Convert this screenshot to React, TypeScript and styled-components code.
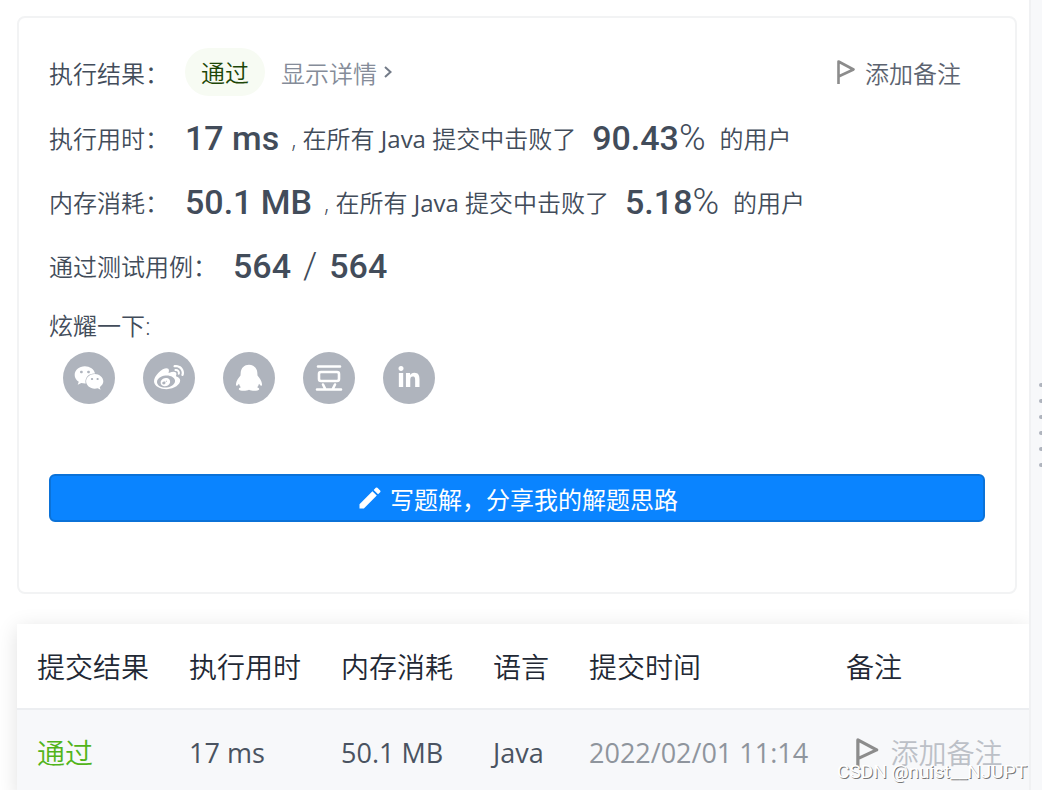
import React from "react";
import styled, { createGlobalStyle } from "styled-components";
import { FaWeixin, FaWeibo, FaLinkedinIn } from "react-icons/fa";
import { MdEdit } from "react-icons/md";

const GlobalStyle = createGlobalStyle`
  * { box-sizing: border-box; }
  body {
    margin: 0;
    background: #fff;
    color: #424c5a;
    font-family: "Open Sans", "Noto Sans CJK SC", sans-serif;
    font-size: 24px;
    font-weight: 350;
    line-height: 32px;
  }
  button { font: inherit; color: inherit; background: none; border: 0; padding: 0; cursor: pointer; }
`;

const Page = styled.div`
  position: relative;
  display: flex;
  height: 100vh;
  overflow: hidden;
`;

const Main = styled.main`
  flex: 1;
  min-width: 0;
  display: flex;
  flex-direction: column;
  gap: 30px;
  padding-top: 16px;
  overflow: hidden;
`;

const Gutter = styled.div`
  flex: 0 0 13px;
  display: flex;
  flex-direction: column;
  align-items: flex-end;
  justify-content: center;
  gap: 12px;
  padding-top: 60px;
  background: #f7f8fa;
  border-left: 2px solid #f0f1f3;
`;

const Dot = styled.span`
  width: 3px;
  height: 4px;
  border-radius: 2px 0 0 2px;
  background: #afb4bd;
`;

const Card = styled.section`
  display: flex;
  flex-direction: column;
  margin: 0 12px 0 17px;
  padding: 30px 30px 70px;
  border: 2px solid #f2f3f4;
  border-radius: 8px;
`;

const ResultRow = styled.div`
  display: flex;
  align-items: center;
  height: 48px;
  gap: 16px;
`;

const StatRow = styled.div`
  display: flex;
  align-items: center;
  height: 48px;
  margin-top: 16px;
  padding-top: 6px;
  line-height: 48px;
  white-space: pre;
`;

const Label = styled.span<{ $width: number }>`
  width: ${(p) => p.$width}px;
  white-space: nowrap;
`;

const Text = styled.span`
  padding-top: 3px;
`;

const Badge = styled.span`
  padding: 9px 16px 7px;
  border-radius: 24px;
  background: #f7fbf3;
  color: #1d4607;
`;

const DetailLink = styled.a`
  display: flex;
  align-items: center;
  gap: 6px;
  color: #858c99;
  text-decoration: none;
`;

const NoteButton = styled.button<{ $muted?: boolean }>`
  display: flex;
  align-items: center;
  gap: ${(p) => (p.$muted ? 12 : 10)}px;
  margin-left: ${(p) => (p.$muted ? "10px" : "auto")};
  margin-right: ${(p) => (p.$muted ? 0 : 24)}px;
  color: ${(p) => (p.$muted ? "#bcc0c7" : "#5c6370")};
  white-space: nowrap;
`;

const Figure = styled.strong`
  padding-bottom: 3px;
  font-family: Roboto, sans-serif;
  font-size: 34px;
  font-weight: 500;
`;

const Percent = styled.span`
  margin-right: 14px;
  padding-bottom: 3px;
  font-family: Roboto, sans-serif;
  font-size: 36px;
  font-weight: 300;
`;

const Slash = styled(Percent)`
  margin: 0 12px;
`;

const Caption = styled.span`
  margin: 0 16px 0 12px;
`;

const Language = styled.span`
  font-weight: 400;
`;

const ShareTitle = styled.div`
  margin-top: 22px;
`;

const ShareList = styled.div`
  display: flex;
  gap: 28px;
  margin: 10px 14px 70px;
`;

const ShareButton = styled.button`
  display: grid;
  place-items: center;
  width: 52px;
  height: 52px;
  border-radius: 50%;
  background: #afb4bd;
  color: #fff;
`;

const WriteButton = styled.button`
  display: flex;
  align-items: center;
  justify-content: center;
  gap: 6px;
  height: 48px;
  border: 2px solid #0b72d8;
  border-radius: 6px;
  background: #0a84ff;
  color: #fff;
  font-weight: 400;
`;

const Table = styled.table`
  width: calc(100% - 17px);
  margin-left: 17px;
  border-spacing: 0;
  table-layout: fixed;
  box-shadow: 0 4px 20px rgba(0, 0, 0, 0.12);
  font-size: 28px;
`;

const HeadCell = styled.th<{ $width?: number }>`
  width: ${(p) => (p.$width ? `${p.$width}px` : "auto")};
  height: 86px;
  padding: 2px 0 0 20px;
  border-bottom: 2px solid #eceef1;
  background: #fff;
  color: #222834;
  font-weight: 350;
  text-align: left;
  white-space: nowrap;
`;

const Cell = styled.td<{ $color?: string; $latin?: boolean }>`
  height: 86px;
  padding: 0 0 0 20px;
  background: #f7f8fa;
  color: ${(p) => p.$color ?? "#4a5361"};
  font-size: ${(p) => (p.$latin ? 27 : 28)}px;
  font-weight: ${(p) => (p.$latin ? 400 : 350)};
  white-space: nowrap;
`;

const Watermark = styled.span`
  position: absolute;
  right: 15px;
  bottom: 6px;
  color: #fff;
  font-family: Roboto, sans-serif;
  font-size: 19px;
  font-weight: 400;
  line-height: 24px;
  text-shadow: 1px 1px 0 #777;
`;

const Flag = ({ size }: { size: number }) => (
  <svg width={size * 0.75} height={size} viewBox="0 0 18 24" fill="none" stroke="#8c8c8c" strokeWidth="2.6" strokeLinejoin="round">
    <path d="M1.5 24V1.5L16.5 9.5L1.5 16.5" />
  </svg>
);

const Chevron = () => (
  <svg width="10" height="14" viewBox="0 0 10 14" fill="none" stroke="#737b88" strokeWidth="2">
    <path d="M2 2L7.5 7L2 12" />
  </svg>
);

const Penguin = () => (
  <svg width="28" height="28" viewBox="0 0 28 28" fill="#fff">
    <path d="M14 .8C18.600 .8 22 4 22.300 8.600L22.500 11.500C24.500 14 26.800 17 27 20C27.100 21.800 26.300 22.300 25.300 21.300L24 19.800C23.700 21.200 23 22.400 22.200 23.300C23.600 23.900 24.400 24.500 24.100 25.400C23.600 27 17 27.300 14 25.800C11 27.300 4.400 27 3.900 25.400C3.600 24.500 4.400 23.900 5.800 23.300C5 22.400 4.300 21.200 4 19.800L2.700 21.300C1.700 22.300 .9 21.800 1 20C1.200 17 3.500 14 5.500 11.500L5.700 8.600C6 4 9.400 .8 14 .8Z" />
  </svg>
);

const Douban = () => (
  <svg width="28" height="28" viewBox="0 0 28 28" fill="none" stroke="#fff" strokeWidth="2.6" strokeLinecap="round" strokeLinejoin="round">
    <path d="M3 2.500H25M2 25.500H26M8 20.500L10 24.500M20 20.500L18 24.500" />
    <rect x="4" y="8" width="20" height="9" rx="2" />
  </svg>
);

const shares = [
  { name: "微信", icon: <FaWeixin size={30} /> },
  { name: "微博", icon: <FaWeibo size={30} /> },
  { name: "QQ", icon: <Penguin /> },
  { name: "豆瓣", icon: <Douban /> },
  { name: "LinkedIn", icon: <FaLinkedinIn size={24} /> },
];

const stats = [
  { label: "执行用时：", value: "17 ms", rate: "90.43" },
  { label: "内存消耗：", value: "50.1 MB", rate: "5.18" },
];

const columns = [
  { title: "提交结果", width: 152 },
  { title: "执行用时", width: 152 },
  { title: "内存消耗", width: 152 },
  { title: "语言", width: 96 },
  { title: "提交时间", width: 257 },
  { title: "备注" },
];

export default function App() {
  return (
    <Page lang="zh-CN">
      <GlobalStyle />
      <Main>
        <Card>
          <ResultRow>
            <Label $width={120}>
              <Text as="div">执行结果：</Text>
            </Label>
            <Badge>通过</Badge>
            <DetailLink href="#detail">
              <Text>显示详情</Text>
              <Chevron />
            </DetailLink>
            <NoteButton type="button">
              <Flag size={24} />
              <Text>添加备注</Text>
            </NoteButton>
          </ResultRow>
          {stats.map((s) => (
            <StatRow key={s.label}>
              <Label $width={136}>{s.label}</Label>
              <Figure>{s.value}</Figure>
              <Caption>
                , 在所有 <Language>Java</Language> 提交中击败了
              </Caption>
              <Figure>{s.rate}</Figure>
              <Percent>%</Percent>
              <span>的用户</span>
            </StatRow>
          ))}
          <StatRow>
            <Label $width={184}>通过测试用例：</Label>
            <Figure>564</Figure>
            <Slash>/</Slash>
            <Figure>564</Figure>
          </StatRow>
          <ShareTitle>炫耀一下:</ShareTitle>
          <ShareList>
            {shares.map((s) => (
              <ShareButton key={s.name} type="button" aria-label={s.name}>
                {s.icon}
              </ShareButton>
            ))}
          </ShareList>
          <WriteButton type="button">
            <MdEdit size={28} />
            <Text>写题解，分享我的解题思路</Text>
          </WriteButton>
        </Card>
        <Table>
          <thead>
            <tr>
              {columns.map((c) => (
                <HeadCell key={c.title} $width={c.width} scope="col">
                  {c.title}
                </HeadCell>
              ))}
            </tr>
          </thead>
          <tbody>
            <tr>
              <Cell $color="#52b41a">通过</Cell>
              <Cell $latin>17 ms</Cell>
              <Cell $latin>50.1 MB</Cell>
              <Cell $latin>Java</Cell>
              <Cell $latin $color="#8f959d">2022/02/01 11:14</Cell>
              <Cell>
                <NoteButton type="button" $muted>
                  <Flag size={30} />
                  添加备注
                </NoteButton>
              </Cell>
            </tr>
          </tbody>
        </Table>
      </Main>
      <Gutter>
        {[0, 1, 2, 3, 4, 5].map((i) => (
          <Dot key={i} />
        ))}
      </Gutter>
      <Watermark>CSDN @nuist__NJUPT</Watermark>
    </Page>
  );
}
